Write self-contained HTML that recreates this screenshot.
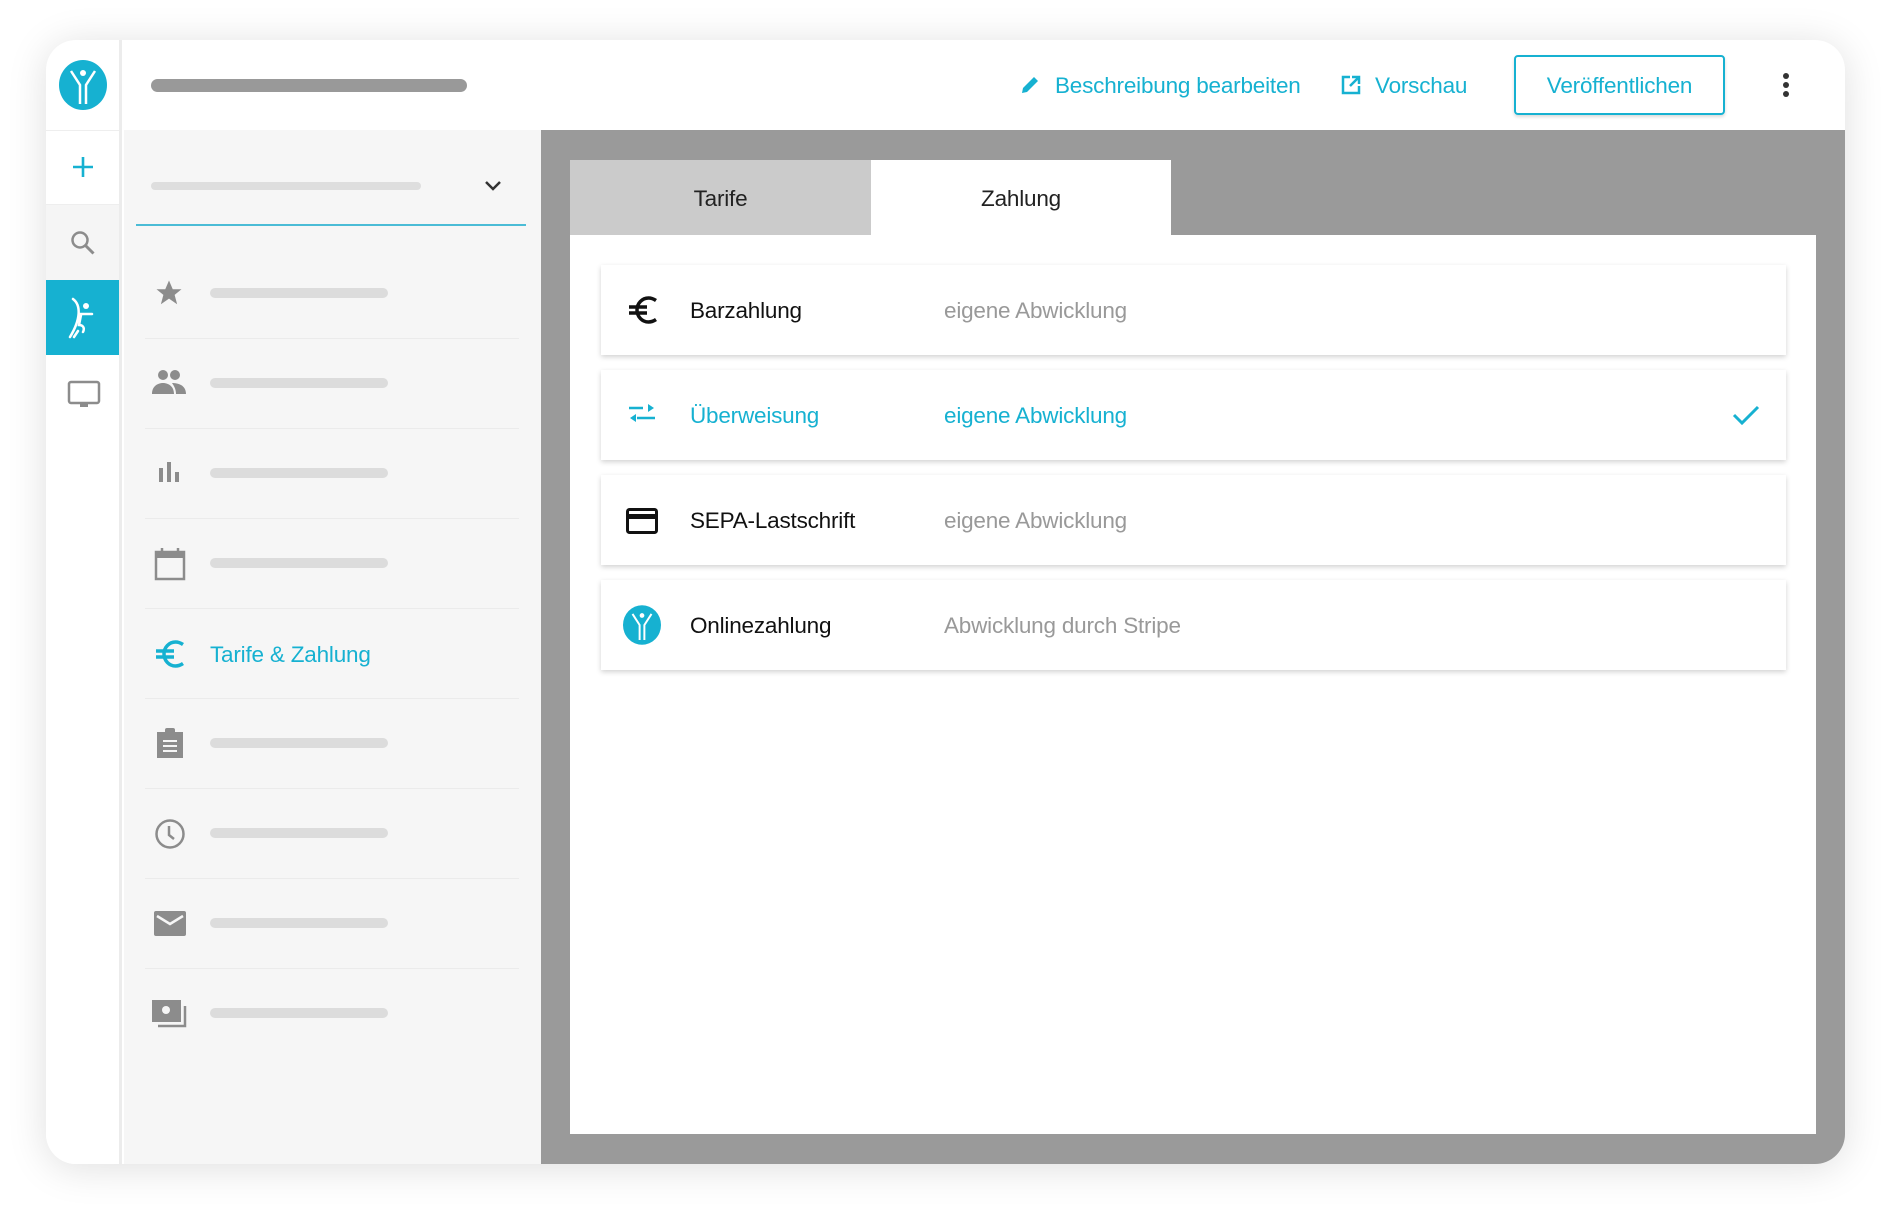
<!DOCTYPE html>
<html><head><meta charset="utf-8"><style>
*{margin:0;padding:0;box-sizing:border-box}
body{width:1891px;height:1215px;background:#fff;font-family:"Liberation Sans",sans-serif;position:relative;overflow:hidden}
.a{position:absolute}
.card{left:46px;top:40px;width:1799px;height:1124px;border-radius:30px;background:#fff;box-shadow:0 4px 40px rgba(0,0,0,.13);overflow:hidden}
.bar{position:absolute;height:10px;border-radius:5px;background:#dcdcdc}
.t{position:absolute;font-size:22.5px;white-space:nowrap;letter-spacing:-0.2px}
.row{position:absolute;left:601px;width:1185px;height:90px;background:#fff;box-shadow:0 2px 5px rgba(0,0,0,.18)}
.div{position:absolute;left:145px;width:374px;height:1px;background:#ebebeb}
</style></head><body>
<div class="a card"></div>
<div class="a" style="left:46px;top:40px;width:76px;height:1124px;border-right:3px solid #ececec;border-radius:30px 0 0 30px;overflow:hidden">
  <div class="a" style="left:0;top:165px;width:76px;height:75px;background:#f5f5f5"></div>
  <div class="a" style="left:0;top:240px;width:76px;height:75px;background:#16b1d1"></div>
  <div class="a" style="left:0;top:315px;width:76px;height:809px;background:#fff"></div>
  <div class="a" style="left:0;top:90px;width:76px;height:1px;background:#eee"></div>
  <div class="a" style="left:0;top:164px;width:76px;height:1px;background:#eee"></div>
</div>
<svg class="a" style="left:59px;top:60px" width="48" height="50" viewBox="0 0 48 50"><ellipse cx="24" cy="25" rx="24" ry="25" fill="#16b1d1"/><circle cx="24" cy="13" r="3" fill="#fff"/><path d="M12 11 L21 25 L21 44 M36 11 L27 25 L27 44" stroke="#fff" stroke-width="2.5" fill="none"/></svg>
<svg class="a" style="left:71px;top:155px" width="24" height="24"><path d="M12 2v20M2 12h20" stroke="#16b1d1" stroke-width="2.6"/></svg>
<svg class="a" style="left:69px;top:229px" width="28" height="28"><circle cx="11" cy="11" r="7.5" stroke="#8c8c8c" stroke-width="2.5" fill="none"/><path d="M16.5 16.5l8 8" stroke="#8c8c8c" stroke-width="3"/></svg>
<svg class="a" style="left:66px;top:297px" width="36" height="42" viewBox="0 0 36 42"><circle cx="20" cy="9" r="3" fill="#fff"/><path d="M7 2c8 6 8 20 -3 38M14 17h12M15 18l-2 10c4 0 6 3 4 7M12 34l-4 6" stroke="#fff" stroke-width="2.5" fill="none" stroke-linecap="round"/></svg>
<svg class="a" style="left:67px;top:380px" width="34" height="28"><rect x="2" y="2" width="30" height="21" rx="2" stroke="#8c8c8c" stroke-width="2.5" fill="none"/><rect x="13" y="23" width="8" height="4" fill="#8c8c8c"/></svg>
<div class="a" style="left:151px;top:79px;width:316px;height:13px;border-radius:7px;background:#999"></div>
<svg class="a" style="left:1019px;top:74px" width="22" height="22"><path d="M3 19l1-5L15 3l4 4L8 18z" fill="#16b1d1"/></svg>
<div class="t" style="left:1055px;top:73px;color:#16b1d1">Beschreibung bearbeiten</div>
<svg class="a" style="left:1340px;top:74px" width="22" height="22"><path d="M10 3H3v16h16v-7" stroke="#16b1d1" stroke-width="2.5" fill="none"/><path d="M12 3h7v7M19 3l-9 9" stroke="#16b1d1" stroke-width="2.5" fill="none"/></svg>
<div class="t" style="left:1375px;top:73px;color:#16b1d1">Vorschau</div>
<div class="a" style="left:1514px;top:55px;width:211px;height:60px;border:2px solid #16b1d1;border-radius:4px;box-shadow:0 2px 3px rgba(0,0,0,.15)"></div>
<div class="t" style="left:1514px;width:211px;text-align:center;top:73px;color:#16b1d1">Veröffentlichen</div>
<svg class="a" style="left:1780px;top:72px" width="12" height="28"><circle cx="6" cy="4" r="3" fill="#333"/><circle cx="6" cy="13" r="3" fill="#333"/><circle cx="6" cy="22" r="3" fill="#333"/></svg>
<div class="a" style="left:124px;top:130px;width:417px;height:1034px;background:#f6f6f6"></div>
<div class="bar" style="left:151px;top:182px;width:270px;height:8px;background:#dedede"></div>
<svg class="a" style="left:484px;top:180px" width="18" height="12"><path d="M2 2l7 7 7-7" stroke="#333" stroke-width="2.5" fill="none"/></svg>
<div class="a" style="left:136px;top:224px;width:390px;height:2px;background:#4bbcd6"></div>
<div class="div" style="top:338px"></div><div class="div" style="top:428px"></div><div class="div" style="top:518px"></div><div class="div" style="top:608px"></div><div class="div" style="top:698px"></div><div class="div" style="top:788px"></div><div class="div" style="top:878px"></div><div class="div" style="top:968px"></div>
<div class="bar" style="left:210px;top:288px;width:178px"></div>
<div class="bar" style="left:210px;top:378px;width:178px"></div>
<div class="bar" style="left:210px;top:468px;width:178px"></div>
<div class="bar" style="left:210px;top:558px;width:178px"></div>
<div class="bar" style="left:210px;top:738px;width:178px"></div>
<div class="bar" style="left:210px;top:828px;width:178px"></div>
<div class="bar" style="left:210px;top:918px;width:178px"></div>
<div class="bar" style="left:210px;top:1008px;width:178px"></div>
<svg class="a" style="left:154px;top:278px" width="30" height="30" viewBox="0 0 24 24"><path d="M12 2l3 7h7l-5.5 4.5 2 7.5-6.5-4.5-6.5 4.5 2-7.5L2 9h7z" fill="#8c8c8c"/></svg>
<svg class="a" style="left:152px;top:368px" width="34" height="28" viewBox="0 0 34 28"><circle cx="11" cy="7" r="5" fill="#8c8c8c"/><circle cx="23" cy="7" r="5" fill="#8c8c8c"/><path d="M0 26c0-8 6-11 11-11s11 3 11 11zM20 15c6 0 14 2 14 11h-10c0-5-2-8-4-11z" fill="#8c8c8c"/></svg>
<svg class="a" style="left:157px;top:460px" width="24" height="24"><rect x="2" y="8" width="4" height="14" fill="#8c8c8c"/><rect x="10" y="2" width="4" height="20" fill="#8c8c8c"/><rect x="18" y="12" width="4" height="10" fill="#8c8c8c"/></svg>
<svg class="a" style="left:154px;top:547px" width="32" height="34"><rect x="2" y="5" width="28" height="27" stroke="#8c8c8c" stroke-width="2.5" fill="none"/><rect x="2" y="5" width="28" height="6" fill="#8c8c8c"/><path d="M8 1v5M24 1v5" stroke="#8c8c8c" stroke-width="2.5"/></svg>
<svg class="a" style="left:154px;top:640px" width="32" height="28" viewBox="0 0 32 28"><path d="M29 4.5C26.5 2.8 24 2 21.5 2 15 2 10 7.5 10 14s5 12 11.5 12c2.5 0 5-.8 7.5-2.5M2 11h18M2 17h18" stroke="#16b1d1" stroke-width="3.5" fill="none"/></svg>
<div class="t" style="left:210px;top:642px;color:#16b1d1">Tarife &amp; Zahlung</div>
<svg class="a" style="left:155px;top:727px" width="30" height="32"><rect x="2" y="5" width="26" height="26" fill="#8c8c8c"/><rect x="10" y="1" width="10" height="7" rx="2" fill="#8c8c8c"/><path d="M8 14h14M8 19h14M8 24h14" stroke="#f6f6f6" stroke-width="2"/></svg>
<svg class="a" style="left:154px;top:818px" width="32" height="32"><circle cx="16" cy="16" r="13.5" stroke="#8c8c8c" stroke-width="2.5" fill="none"/><path d="M15 8v9l5 4" stroke="#8c8c8c" stroke-width="2.5" fill="none"/></svg>
<svg class="a" style="left:154px;top:911px" width="32" height="26"><rect x="0" y="0" width="32" height="25" rx="2" fill="#8c8c8c"/><path d="M3 5l13 8 13-8" stroke="#f6f6f6" stroke-width="2.5" fill="none"/></svg>
<svg class="a" style="left:152px;top:1000px" width="36" height="28"><rect x="0" y="0" width="29" height="22" fill="#8c8c8c"/><circle cx="14" cy="10" r="4" fill="#f6f6f6"/><path d="M33 6v20H6" stroke="#8c8c8c" stroke-width="2.5" fill="none"/></svg>
<div class="a" style="left:541px;top:130px;width:1304px;height:1034px;background:#9a9a9a;border-radius:0 0 30px 0"></div>
<div class="a" style="left:570px;top:160px;width:301px;height:75px;background:#cbcbcb"></div>
<div class="a" style="left:871px;top:160px;width:300px;height:75px;background:#fff"></div>
<div class="t" style="left:570px;width:301px;text-align:center;top:186px;color:#222">Tarife</div>
<div class="t" style="left:871px;width:300px;text-align:center;top:186px;color:#222">Zahlung</div>
<div class="a" style="left:570px;top:235px;width:1246px;height:899px;background:#fff"></div>
<div class="row" style="top:265px"></div><div class="row" style="top:370px"></div><div class="row" style="top:475px"></div><div class="row" style="top:580px"></div>
<svg class="a" style="left:627px;top:296px" width="32" height="28" viewBox="0 0 32 28"><path d="M29 4.5C26.5 2.8 24 2 21.5 2 15 2 10 7.5 10 14s5 12 11.5 12c2.5 0 5-.8 7.5-2.5M2 11h18M2 17h18" stroke="#111" stroke-width="3.5" fill="none"/></svg>
<div class="t" style="left:690px;top:298px;color:#111">Barzahlung</div>
<div class="t" style="left:944px;top:298px;color:#999">eigene Abwicklung</div>
<svg class="a" style="left:627px;top:403px" width="30" height="24"><path d="M10 15h18M16 5H2" stroke="#16b1d1" stroke-width="2.5"/><path d="M21 1l6 4-6 4zM9 11l-6 4 6 4z" fill="#16b1d1"/></svg>
<div class="t" style="left:690px;top:403px;color:#16b1d1">Überweisung</div>
<div class="t" style="left:944px;top:403px;color:#16b1d1">eigene Abwicklung</div>
<svg class="a" style="left:1731px;top:403px" width="30" height="24"><path d="M3 12l8 8L27 4" stroke="#16b1d1" stroke-width="3" fill="none"/></svg>
<svg class="a" style="left:626px;top:508px" width="32" height="26"><rect x="1.5" y="1.5" width="29" height="23" rx="2" stroke="#111" stroke-width="3" fill="none"/><rect x="2" y="6" width="28" height="5" fill="#111"/></svg>
<div class="t" style="left:690px;top:508px;color:#111">SEPA-Lastschrift</div>
<div class="t" style="left:944px;top:508px;color:#999">eigene Abwicklung</div>
<svg class="a" style="left:623px;top:605px" width="38" height="40" viewBox="0 0 48 50"><ellipse cx="24" cy="25" rx="24" ry="25" fill="#16b1d1"/><circle cx="24" cy="13" r="3" fill="#fff"/><path d="M12 11 L21 25 L21 44 M36 11 L27 25 L27 44" stroke="#fff" stroke-width="2.5" fill="none"/></svg>
<div class="t" style="left:690px;top:613px;color:#111">Onlinezahlung</div>
<div class="t" style="left:944px;top:613px;color:#999">Abwicklung durch Stripe</div>
</body></html>
